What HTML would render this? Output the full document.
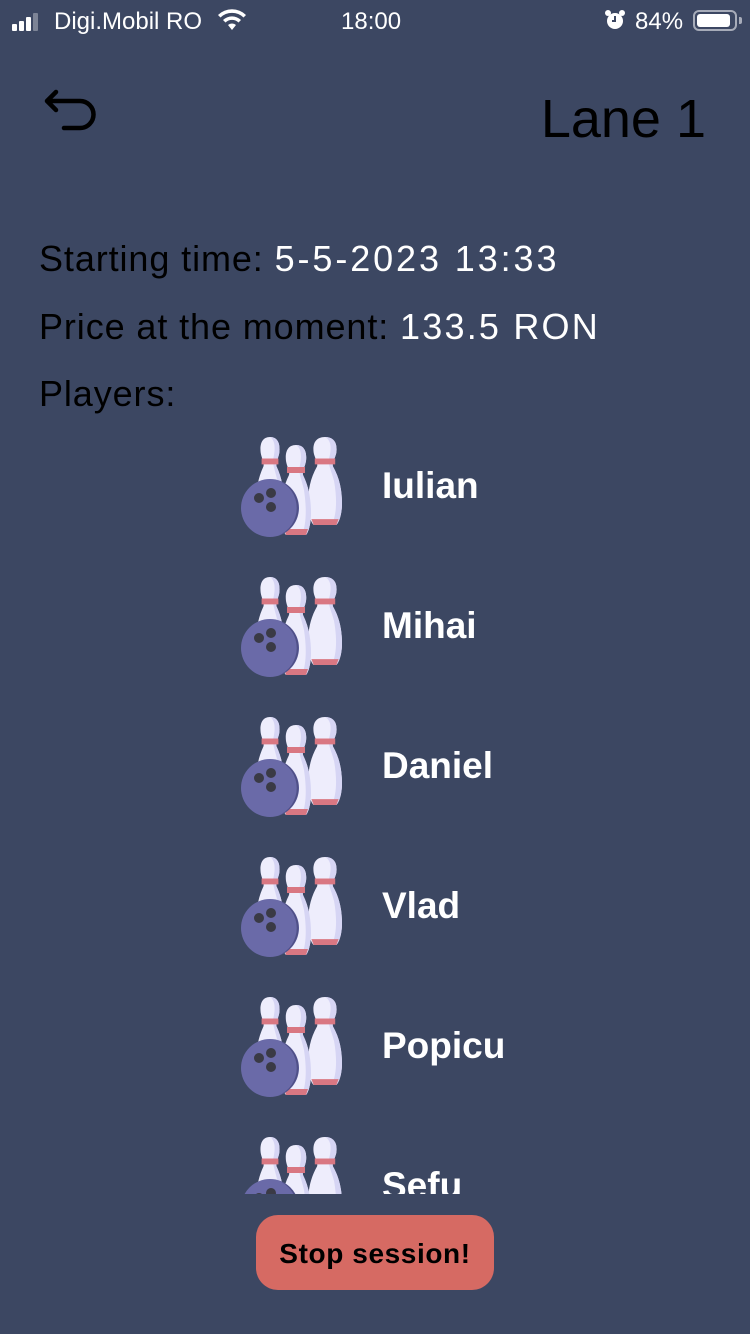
<!DOCTYPE html>
<html><head><meta charset="utf-8"><style>
*{margin:0;padding:0;box-sizing:border-box}
body{width:750px;height:1334px;background:#3c4762;font-family:"Liberation Sans",sans-serif;position:relative;overflow:hidden}
.a{position:absolute;white-space:nowrap}
.sb{color:#fff;font-size:24px;top:8px}
.t{color:#000;font-size:36px;letter-spacing:0.9px}
.v{color:#fff;letter-spacing:2.2px}
.list{position:absolute;left:0;top:420px;width:750px;height:774px;overflow:hidden}
.row{position:absolute;left:240px;width:400px;height:102px}
.row svg{position:absolute;left:0;top:0}
.row span{position:absolute;left:142px;top:30px;color:#fff;font-weight:bold;font-size:37px}
</style></head><body>
<svg width="0" height="0" style="position:absolute">
<defs>
<symbol id="pin" viewBox="0 0 30 90" preserveAspectRatio="none">
<path d="M15,0C6,0 4,8 5,16C6,22 9,26 8,30C2,42 0,55 0,68C0,80 3,88 5,90L25,90C27,88 30,80 30,68C30,55 28,42 22,30C21,26 24,22 25,16C26,8 24,0 15,0Z" fill="#eeedfc"/>
<path d="M15,0C24,0 26,8 25,16C24,22 21,26 22,30C28,42 30,55 30,68C30,80 27,88 25,90L21,90C25,80 26,65 23,45C20,32 17,28 19,20C21,10 20,3 15,0Z" fill="#d6d5f4"/>
<rect x="6" y="22" width="18" height="6" fill="#d97782"/>
<path d="M3,84L27,84L25,90L5,90Z" fill="#d97782"/>
</symbol>
<symbol id="ico" viewBox="0 0 102 102">
<use href="#pin" x="16" y="2" width="28" height="88"/>
<use href="#pin" x="68" y="2" width="34" height="88"/>
<use href="#pin" x="41" y="10" width="30" height="90"/>
<circle cx="30" cy="73" r="29" fill="#6a6aa8"/>
<path d="M38,45.2A29,29 0 0 1 38,100.8A30,30 0 0 0 38,45.2Z" fill="#4f5088"/>
<circle cx="19" cy="63" r="5" fill="#3a3a45"/>
<circle cx="31" cy="58" r="5" fill="#3a3a45"/>
<circle cx="31" cy="72" r="5" fill="#3a3a45"/>
</symbol>
</defs></svg>

<div class="a" style="left:12px;top:12px">
<div style="position:absolute;left:0;top:12px;width:5px;height:7px;background:#fff;border-radius:1px"></div>
<div style="position:absolute;left:7px;top:9px;width:5px;height:10px;background:#fff;border-radius:1px"></div>
<div style="position:absolute;left:14px;top:5px;width:5px;height:14px;background:#fff;border-radius:1px"></div>
<div style="position:absolute;left:21px;top:1px;width:5px;height:18px;background:#7d8496;border-radius:1px"></div>
</div>
<div class="a sb" style="left:54px">Digi.Mobil RO</div>
<svg class="a" style="left:218px;top:9px" width="28" height="22" viewBox="0 0 28 22"><path d="M14,21L10,16A6,6 0 0 1 18,16Z" fill="#fff"/><path d="M5,11A13,13 0 0 1 23,11L20.5,13.5A9.5,9.5 0 0 0 7.5,13.5Z" fill="#fff"/><path d="M0,6A20,20 0 0 1 28,6L25.5,8.5A16.5,16.5 0 0 0 2.5,8.5Z" fill="#fff"/></svg>
<div class="a sb" style="left:341px;font-size:24px">18:00</div>
<svg class="a" style="left:604px;top:9px" width="22" height="22" viewBox="0 0 22 22"><circle cx="11" cy="12" r="8" fill="#fff"/><circle cx="4" cy="4" r="3" fill="#fff"/><circle cx="18" cy="4" r="3" fill="#fff"/><path d="M11,7V12H8" stroke="#3c4762" stroke-width="2" fill="none"/></svg>
<div class="a sb" style="left:635px">84%</div>
<div class="a" style="left:693px;top:10px;width:44px;height:21px;border:2px solid #a7acb9;border-radius:6px"><div style="position:absolute;left:2px;top:2px;width:33px;height:13px;background:#fff;border-radius:3px"></div></div>
<div class="a" style="left:739px;top:17px;width:3px;height:7px;background:#a7acb9;border-radius:0 2px 2px 0"></div>

<svg class="a" style="left:40px;top:84px" width="60" height="52" viewBox="0 0 60 52"><path d="M16,8L7,17L16,26M7,17H40A13,13 0 0 1 40,44H24" stroke="#000" stroke-width="4.5" fill="none" stroke-linecap="round" stroke-linejoin="round"/></svg>
<div class="a" style="right:44px;top:88px;font-size:54px;color:#000">Lane 1</div>

<div class="a t" style="left:39px;top:238px">Starting time: <span class="v" style="letter-spacing:2.9px">5-5-2023 13:33</span></div>
<div class="a t" style="left:39px;top:306px">Price at the moment: <span class="v">133.5 RON</span></div>
<div class="a t" style="left:39px;top:373px">Players:</div>

<div class="list">
<div class="row" style="top:15px"><svg width="102" height="102"><use href="#ico"/></svg><span>Iulian</span></div>
<div class="row" style="top:155px"><svg width="102" height="102"><use href="#ico"/></svg><span>Mihai</span></div>
<div class="row" style="top:295px"><svg width="102" height="102"><use href="#ico"/></svg><span>Daniel</span></div>
<div class="row" style="top:435px"><svg width="102" height="102"><use href="#ico"/></svg><span>Vlad</span></div>
<div class="row" style="top:575px"><svg width="102" height="102"><use href="#ico"/></svg><span>Popicu</span></div>
<div class="row" style="top:715px"><svg width="102" height="102"><use href="#ico"/></svg><span>Sefu</span></div>
</div>

<div class="a" style="left:256px;top:1215px;width:238px;height:75px;background:#d66a63;border-radius:22px;color:#000;font-weight:bold;font-size:28px;letter-spacing:0.6px;text-align:center;line-height:77px">Stop session!</div>
</body></html>
